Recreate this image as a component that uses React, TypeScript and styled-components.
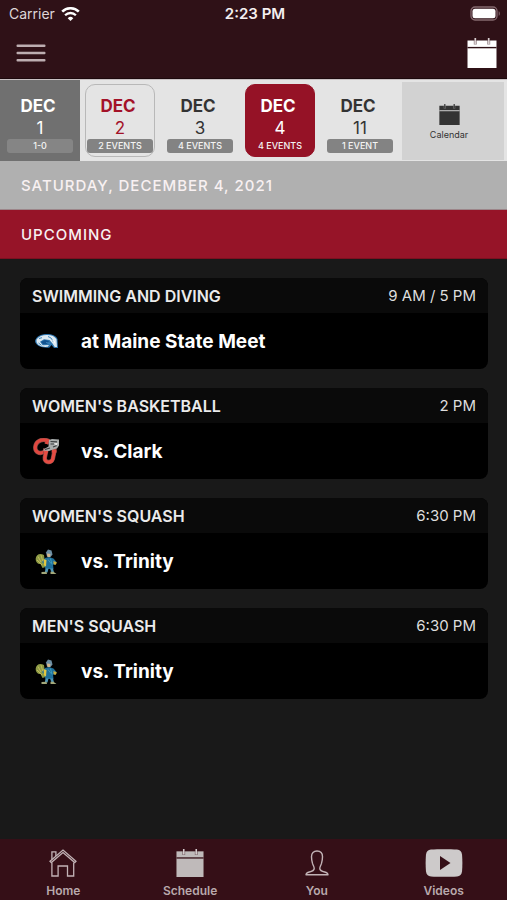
import React from "react";
import styled, { createGlobalStyle, css } from "styled-components";

const GlobalStyle = createGlobalStyle`
  *, *::before, *::after { box-sizing: border-box; }
  body {
    margin: 0;
    background: #191919;
    font-family: Inter, "Liberation Sans", sans-serif;
    color: #ffffff;
  }
  button {
    margin: 0;
    padding: 0;
    border: 0;
    background: none;
    color: inherit;
    font: inherit;
    cursor: pointer;
  }
  h1, h2, h3, p, ul { margin: 0; padding: 0; font: inherit; }
  svg { display: block; }
`;

const Screen = styled.div`
  display: flex;
  flex-direction: column;
  min-height: 100vh;
`;

const TopBar = styled.header`
  background: #2f1117;
  border-bottom: 1px solid #1d090d;
`;

const StatusBar = styled.div`
  display: grid;
  grid-template-columns: 1fr auto 1fr;
  align-items: center;
  height: 28px;
  padding: 0 6px 0 9px;
  font-size: 14px;
  line-height: 20px;
  color: #ded6d8;
`;

const CarrierInfo = styled.div`
  display: flex;
  align-items: center;
  gap: 6px;
`;

const Clock = styled.div`
  font-size: 15px;
  font-weight: 600;
  color: #f4eff0;
`;

const BatterySlot = styled.div`
  justify-self: end;
`;

const ActionRow = styled.div`
  display: flex;
  align-items: center;
  justify-content: space-between;
  height: 50px;
  padding: 0 10px 0 16px;
`;

const DateStrip = styled.div`
  display: grid;
  grid-template-columns: 80fr 80fr 80fr 80fr 80fr 107fr;
  height: 82px;
  background: #e4e4e4;
  border-top: 1px solid #c9c1c3;
`;

type TileKind = "past" | "today" | "selected" | "plain";

const tileStyles = {
  past: css`
    color: #ffffff;
  `,
  today: css`
    color: #a31228;
    border-color: #b8b8b8;
  `,
  selected: css`
    color: #ffffff;
    background: #951226;
    border-color: #951226;
  `,
  plain: css`
    color: #333333;
  `,
};

const TileCell = styled.div<{ $past: boolean }>`
  display: flex;
  padding: 4px 5px;
  background: ${(p) => (p.$past ? "#707070" : "transparent")};
`;

const DateTile = styled.button<{ $kind: TileKind }>`
  display: flex;
  flex: 1;
  min-width: 0;
  flex-direction: column;
  align-items: center;
  justify-content: flex-end;
  padding-bottom: 3px;
  border: 1px solid transparent;
  border-radius: 10px;
  ${(p) => tileStyles[p.$kind]}
`;

const Month = styled.span`
  padding-right: 4px;
  font-size: 17px;
  line-height: 22px;
  font-weight: 700;
`;

const Day = styled.span`
  font-size: 17px;
  line-height: 22px;
`;

const Pill = styled.span<{ $kind: TileKind }>`
  width: 66px;
  border-radius: 3px;
  font-size: 9px;
  line-height: 14px;
  font-weight: 500;
  text-align: center;
  white-space: nowrap;
  color: #f4f4f4;
  background: ${(p) =>
    p.$kind === "selected" ? "transparent" : p.$kind === "past" ? "#858585" : "#838383"};
`;

const CalendarButton = styled.button`
  display: flex;
  flex-direction: column;
  align-items: center;
  justify-content: center;
  gap: 4px;
  margin: 2px 3px 1px 2px;
  padding: 3px 8px 0 0;
  background: #d2d2d2;
  color: #333333;
  font-size: 9px;
  line-height: 12px;
`;

const Banner = styled.h2<{ $tone: "grey" | "red" }>`
  padding: 15px 21px 13px;
  font-size: 15px;
  line-height: 20px;
  font-weight: 500;
  letter-spacing: 1px;
  background: ${(p) => (p.$tone === "grey" ? "#b0b0b0" : "#961428")};
  border-bottom: 1px solid ${(p) => (p.$tone === "grey" ? "#9c8589" : "#7c1020")};
  color: #f8f1f2;
`;

const Events = styled.ul`
  display: flex;
  flex: 1;
  flex-direction: column;
  gap: 19px;
  padding: 19px 19px 24px 20px;
  list-style: none;
`;

const EventCard = styled.li`
  border-radius: 8px;
  overflow: hidden;
  background: #000000;
`;

const CardHeader = styled.div`
  display: flex;
  align-items: center;
  justify-content: space-between;
  height: 35px;
  padding: 0 12px;
  background: #0a0a0a;
  line-height: 20px;
`;

const Sport = styled.h3`
  font-size: 16px;
  font-weight: 600;
  color: #ebebeb;
`;

const Time = styled.p`
  font-size: 15px;
  color: #dedede;
`;

const CardBody = styled.div`
  display: flex;
  align-items: center;
  gap: 19px;
  height: 56px;
  padding: 1px 12px 0;
`;

const LogoSlot = styled.div`
  display: flex;
  justify-content: center;
  width: 30px;
  padding-right: 2px;
`;

const Opponent = styled.p`
  font-size: 19px;
  line-height: 24px;
  font-weight: 700;
`;

const TabBar = styled.nav`
  position: sticky;
  bottom: 0;
  display: grid;
  grid-template-columns: repeat(4, 1fr);
  height: 61px;
  background: #350f17;
`;

const Tab = styled.a`
  display: flex;
  flex-direction: column;
  align-items: center;
  justify-content: flex-end;
  padding-bottom: 1px;
  color: #b9a9ac;
  font-size: 12px;
  line-height: 16px;
  font-weight: 600;
  text-decoration: none;
`;

const TabIcon = styled.span`
  display: flex;
  align-items: center;
  height: 34px;
  margin-bottom: 3px;
`;

function WifiIcon() {
  return (
    <svg width="19" height="15" viewBox="0 0 19 15" fill="#fff" aria-hidden="true">
      <path d="M9.5 14 6.700 11.200a4 4 0 0 1 5.600 0z" />
      <path d="M1.200 4.700a11.800 11.800 0 0 1 16.600 0" fill="none" stroke="#fff" strokeWidth="2.600" />
      <path d="M4.100 8.200a7.700 7.700 0 0 1 10.800 0" fill="none" stroke="#fff" strokeWidth="2.300" />
    </svg>
  );
}

function BatteryIcon() {
  return (
    <svg width="31" height="16" viewBox="0 0 31 16" aria-label="Battery full" role="img">
      <rect x="1" y="1" width="26" height="13" rx="4" fill="none" stroke="#85696f" strokeWidth="1.3" />
      <rect x="2.500" y="2.700" width="23" height="9.600" rx="2.500" fill="#fff" />
      <path d="M28.7 5.200c1.500.6 1.500 4 0 4.600z" fill="#85696f" />
    </svg>
  );
}

function MenuIcon() {
  return (
    <svg width="30" height="18" viewBox="0 0 30 18" fill="#bdaeb1" aria-hidden="true">
      <rect x="0.500" y="0.500" width="29" height="2.500" rx="1" />
      <rect x="0.500" y="7.700" width="29" height="2.500" rx="1" />
      <rect x="0.500" y="15" width="29" height="2.500" rx="1" />
    </svg>
  );
}

function CalendarIcon({ size, fill, ground, ring }: { size: number; fill: string; ground: string; ring: string }) {
  return (
    <svg width={size} height={size} viewBox="0 0 30 30" aria-hidden="true">
      <path d="M0.500 2.500h29V30h-29z" fill={fill} />
      <path d="M0.500 9.600h29" stroke={ground} strokeWidth="1.4" />
      <path d="M8.300 2v4.500M21.700 2v4.500" stroke={ground} strokeWidth="3" opacity=".5" />
      <path d="M8.300 0v6M21.700 0v6" stroke={ring} strokeWidth="1.7" />
    </svg>
  );
}

function HomeIcon() {
  return (
    <svg width="28" height="28" viewBox="0 0 28 28" fill="none" stroke="#c2b3b6" strokeWidth="1.3" aria-hidden="true">
      <path d="M1 12.200 14 1l13 11.200-1.300 1.400L14 3.600 2.300 13.600z" />
      <path d="M2.900 10.500V2.800h4v4.100" />
      <path d="M2.900 13.400V27h6.200V17h9.400v10h6.200V13.400" />
    </svg>
  );
}

function PersonIcon() {
  return (
    <svg width="24" height="26" viewBox="0 0 24 26" fill="none" stroke="#c2b3b6" strokeWidth="1.4" strokeLinejoin="round" aria-hidden="true">
      <path d="M1 24.800c.2-1.700 1.600-2.400 3.300-2.800 2.900-.7 4.800-1.300 4.900-3.400.1-1.800-1-3-1.700-5.200C6.900 11.200 6.500 9 6.500 6.800 6.500 3.200 8.700 1 12 1s5.500 2.200 5.500 5.800c0 2.200-.4 4.400-1 6.600-.7 2.200-1.800 3.400-1.700 5.200.1 2.100 2 2.700 4.900 3.400 1.700.4 3.100 1.100 3.300 2.800z" />
    </svg>
  );
}

function VideoIcon() {
  return (
    <svg width="38" height="28" viewBox="0 0 38 28" aria-hidden="true">
      <path d="M6 .6C13 0 25 0 32 .6c3 .3 4.700 2 5 4.900.5 6 .5 11 0 17-.3 2.900-2 4.600-5 4.900-7 .6-19 .6-26 0-3-.3-4.700-2-5-4.900-.5-6-.5-11 0-17C1.300 2.600 3 .9 6 .6z" fill="#cdcaca" />
      <path d="M15 7v14l10.500-7z" fill="#350f17" />
    </svg>
  );
}

function MaineLogo() {
  return (
    <svg width="25" height="17" viewBox="0 0 25 17" aria-hidden="true">
      <path d="M1 8C2 3.500 7 1 13 1c5 0 9 1.500 10.500 5L24 15h-4l-2.500-3-2 2.500C9 15.500 1.500 13 1 8z" fill="#2d74ad" />
      <path d="M2.500 6.500C5 3 9 1.800 13.500 2c4 .1 7.500 1.400 9 4.300l.5 7.700h-2.300l-2-3.300L15.500 7 10 6.300 6 8.800l2.700 3.400L15 12l-1.300 1.800C8.500 14.500 3.500 12.500 2.500 9z" fill="#dce9f1" />
      <path d="m7 9 4-2 4 1.200L13 11H9z" fill="#12528f" />
      <path d="m14 3.500 3 1.500 2.500 4M5 5.500l3-.8M4.500 10l3 2.300M12 9.500l4 1" fill="none" stroke="#3d86bb" strokeWidth="1" />
      <path d="m17.500 6.500 3.200 1.500.8 3z" fill="#ffffff" />
    </svg>
  );
}

function ClarkLogo() {
  return (
    <svg width="27" height="27" viewBox="0 0 27 27" aria-hidden="true">
      <path d="m13.500 6 1-3.500C10 .8 4.500 2.300 2.800 6.800 1.200 11.500 3.500 15 7.500 15c2 0 3.500-.7 5-2.200" fill="none" stroke="#7d4a46" strokeWidth="4.400" />
      <path d="m13.500 6 1-3.500C10 .8 4.500 2.300 2.800 6.800 1.200 11.500 3.500 15 7.500 15c2 0 3.500-.7 5-2.200" fill="none" stroke="#e0473f" strokeWidth="3.200" />
      <path d="m13.300 12.500-1.500 7c-.8 5.500 6.700 6 8 1.500l1.700-8.500M10 12.500h5M18.500 12.500h5" fill="none" stroke="#7d4a46" strokeWidth="4.400" />
      <path d="m13.300 13-1.500 6.500c-.8 5.500 6.700 6 8 1.500l1.700-8M10.500 13h4.500M19 13h4.500" fill="none" stroke="#e64c43" strokeWidth="3.200" />
      <path d="m16 2 3-1 7 .5v6l-2 3-4 1-4 1.500-6-.5 2-2 3.500-2z" fill="#a9adad" />
      <path d="m17.500 3.500 6.500.3M17.500 6h3.500M20 9l4-1.500M12 11.500l5-1.500" stroke="#3a3e40" strokeWidth="1.200" />
      <path d="m21 5.500 3.500-.5-1 2.500z" fill="#f0f0f0" />
    </svg>
  );
}

function TrinityLogo() {
  return (
    <svg width="23" height="26" viewBox="0 0 23 26" aria-hidden="true">
      <path d="M9 6C5 3.500 1 5.500.7 9.500.5 13 2.500 15 5.500 15l2 4 3-1z" fill="#8c9a45" />
      <path d="M3 7.500 6 13M6 6l2 7M2 11l5 5" stroke="#c0b95a" strokeWidth="1" />
      <path d="M11 3.500 13 .5l3.500 1 1 4-2 2.500-3.500-.5z" fill="#6e8fa4" />
      <path d="m12 4.500 3.500.5-.5 3h-2.500z" fill="#d4b78a" />
      <path d="m10 9 4-1 4.500 1.500 3 3.500-2 3-1.500-.5.500 4.500h-8L9 15l-2-2z" fill="#1e6f9a" />
      <path d="m8.500 10 3 1-.5 6.500-2-1z" fill="#e3c740" />
      <path d="m18.500 12 3.500 1.500-1.500 2.500-2-1z" fill="#c9ae3e" />
      <path d="M10.500 19.500h3l-1 4H9.800zM15 19.500h3l1 4h-2.500z" fill="#4d94b5" />
      <path d="m6.500 23 5-.3.500 2.300H6.500zM15.500 22.700h3l3 2.300h-6z" fill="#a3a87a" />
      <path d="m13 10.500 3 4M15.500 9.500l1.500 6" stroke="#3b9aba" strokeWidth="1" />
    </svg>
  );
}

const dates: { month: string; day: string; note: string; kind: TileKind }[] = [
  { month: "DEC", day: "1", note: "1-0", kind: "past" },
  { month: "DEC", day: "2", note: "2 EVENTS", kind: "today" },
  { month: "DEC", day: "3", note: "4 EVENTS", kind: "plain" },
  { month: "DEC", day: "4", note: "4 EVENTS", kind: "selected" },
  { month: "DEC", day: "11", note: "1 EVENT", kind: "plain" },
];

const events = [
  { sport: "SWIMMING AND DIVING", time: "9 AM / 5 PM", opponent: "at Maine State Meet", logo: <MaineLogo /> },
  { sport: "WOMEN'S BASKETBALL", time: "2 PM", opponent: "vs. Clark", logo: <ClarkLogo /> },
  { sport: "WOMEN'S SQUASH", time: "6:30 PM", opponent: "vs. Trinity", logo: <TrinityLogo /> },
  { sport: "MEN'S SQUASH", time: "6:30 PM", opponent: "vs. Trinity", logo: <TrinityLogo /> },
];

const tabs = [
  { label: "Home", icon: <HomeIcon /> },
  { label: "Schedule", icon: <CalendarIcon size={28} fill="#bfbaba" ground="#350f17" ring="#d5cccd" /> },
  { label: "You", icon: <PersonIcon /> },
  { label: "Videos", icon: <VideoIcon /> },
];

export default function App() {
  return (
    <Screen>
      <GlobalStyle />
      <TopBar>
        <StatusBar>
          <CarrierInfo>
            Carrier
            <WifiIcon />
          </CarrierInfo>
          <Clock>2:23 PM</Clock>
          <BatterySlot>
            <BatteryIcon />
          </BatterySlot>
        </StatusBar>
        <ActionRow>
          <button type="button" aria-label="Menu">
            <MenuIcon />
          </button>
          <button type="button" aria-label="Open calendar">
            <CalendarIcon size={30} fill="#ffffff" ground="#2f1117" ring="#d9cfd1" />
          </button>
        </ActionRow>
      </TopBar>
      <DateStrip>
        {dates.map((d) => (
          <TileCell key={d.day} $past={d.kind === "past"}>
            <DateTile type="button" $kind={d.kind} aria-pressed={d.kind === "selected"}>
              <Month>{d.month}</Month>
              <Day>{d.day}</Day>
              <Pill $kind={d.kind}>{d.note}</Pill>
            </DateTile>
          </TileCell>
        ))}
        <CalendarButton type="button">
          <CalendarIcon size={21} fill="#333333" ground="#d2d2d2" ring="#333333" />
          Calendar
        </CalendarButton>
      </DateStrip>
      <Banner $tone="grey">SATURDAY, DECEMBER 4, 2021</Banner>
      <Banner $tone="red">UPCOMING</Banner>
      <Events>
        {events.map((e) => (
          <EventCard key={e.sport}>
            <CardHeader>
              <Sport>{e.sport}</Sport>
              <Time>{e.time}</Time>
            </CardHeader>
            <CardBody>
              <LogoSlot>{e.logo}</LogoSlot>
              <Opponent>{e.opponent}</Opponent>
            </CardBody>
          </EventCard>
        ))}
      </Events>
      <TabBar>
        {tabs.map((t) => (
          <Tab key={t.label} href={`#${t.label.toLowerCase()}`}>
            <TabIcon>{t.icon}</TabIcon>
            {t.label}
          </Tab>
        ))}
      </TabBar>
    </Screen>
  );
}
